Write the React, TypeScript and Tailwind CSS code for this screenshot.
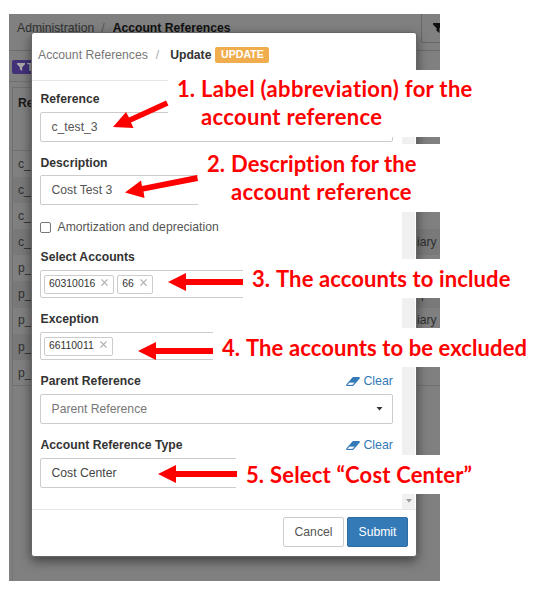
import type { ReactNode } from "react";

const rows = [
  { ref: "c_", type: "" },
  { ref: "c_", type: "" },
  { ref: "c_", type: "" },
  { ref: "c_", type: "iary" },
  { ref: "p_", type: "" },
  { ref: "p_", type: "›pan" },
  { ref: "p_", type: "iary :" },
  { ref: "p_", type: "" },
  { ref: "p_", type: "" },
];

function FunnelIcon({ className }: { className: string }) {
  return (
    <svg viewBox="0 0 14 14" className={className} fill="currentColor">
      <path d="M0 0h14v2L9 7.500V14L5 11V7.500L0 2z" />
    </svg>
  );
}

function EraserIcon() {
  return (
    <svg viewBox="0 256 1920 1280" className="h-[9px] w-[14px]" fill="currentColor" stroke="currentColor" strokeWidth="50">
      <path d="M896 1408l336-384H464l-336 384h768zM1909 331q15 34 9.500 71.500T1888 468L992 1492q-38 44-96 44H128q-38 0-69.500-20.500T11 1461q-15-34-9.500-71.500T32 1324L928 300q38-44 96-44h768q38 0 69.500 20.500T1909 331z" />
    </svg>
  );
}

function Label({ children, clear }: { children: ReactNode; clear?: boolean }) {
  return (
    <div className="flex h-4 items-center justify-between">
      <span className="pl-[0.5px] text-[12.2px] font-bold text-[#333]">{children}</span>
      {clear && (
        <span className="flex items-center gap-[3px] text-[12.4px] text-[#337ab7]">
          <EraserIcon />
          Clear
        </span>
      )}
    </div>
  );
}

function Tag({ children }: { children: ReactNode }) {
  return (
    <span className="flex h-[19px] items-center gap-[6px] rounded-[2px] border border-[#ccc] pr-[5px] pl-1 text-[10.4px] text-[#333]">
      {children}
      <svg viewBox="0 0 8 8" className="mb-[3px] size-[7px]" stroke="#aaa" strokeWidth="1.300">
        <path d="M.5 .5l7 7M7.500 .5l-7 7" />
      </svg>
    </span>
  );
}

function Note({ box, number, children }: { box: string; number: string; children: ReactNode }) {
  return (
    <div className={`absolute right-0 flex items-start bg-white font-['Lato',sans-serif] text-[22px] leading-[28px] font-bold whitespace-nowrap text-[#f00] [font-variant-ligatures:none] ${box}`}>
      <span className="w-[24px] shrink-0 tracking-normal">{number}</span>
      <div>{children}</div>
    </div>
  );
}

export default function App() {
  return (
    <div className="relative h-[592px] w-[537px] overflow-hidden bg-white pt-[14px] pl-[9px] font-['Liberation_Sans',Arial,sans-serif] text-[12.2px]">
      <div className="relative h-[567px] w-[431px] overflow-hidden bg-[#808080] whitespace-nowrap text-[#303030]">
        <div className="flex h-[37px] items-start justify-between border-b border-[#6c6c6c]">
          <div className="flex gap-[7px] pt-[7px] pl-2 leading-[14px]">
            <span>Administration</span>
            <span className="text-[#555]">/</span>
            <b className="pl-[1px] text-[#101010]">Account References</b>
          </div>
          <div className="flex h-[29px] w-[19px] items-center overflow-hidden border-b border-l border-[#686868] pl-[11px] text-[#111]">
            <FunnelIcon className="size-[10px] shrink-0" />
          </div>
        </div>
        <div className="flex h-[31px] items-start border-b border-[#707070] pt-[9px] pl-[3px]">
          <span className="flex h-[14px] w-8 items-center gap-[2px] rounded-[2px] bg-[#43317a] px-[5px] text-[10px] font-bold text-[#aaa]">
            <FunnelIcon className="size-2" />
            T
          </span>
        </div>
        <div className="mt-[5px] ml-[3px] h-[299px] border border-r-0 border-[#707070]">
          <div className="h-[63px] border-b border-[#707070] pt-[6px] pl-[5px] font-bold text-[#181818]">Re</div>
          {rows.map((row, i) => (
            <div key={i} className={`flex h-[26.1px] items-center pl-[5px] ${i % 2 ? "bg-[#797979]" : ""}`}>
              <span className="w-[399px] shrink-0">{row.ref}</span>
              <span className="shrink-0">{row.type}</span>
            </div>
          ))}
        </div>
        <div className="ml-[3px] h-[200px] border-l border-[#747474]" />

        <div className="absolute top-[18px] left-[22px] flex h-[525px] w-[386px] flex-col rounded-[3px] border border-[#666] bg-white text-[#555] shadow-[0_4px_12px_rgba(0,0,0,0.5)]">
          <div className="flex h-[48px] shrink-0 items-center border-b border-[#e5e5e5] pb-[3px] pl-[6px]">
            <span className="text-[#777]">Account References</span>
            <span className="ml-2 text-[#aaa]">/</span>
            <b className="ml-[11px] text-[#333]">Update</b>
            <span className="ml-1 flex h-4 w-[54px] items-center justify-center rounded-[2px] bg-[#f0ad4e] text-[10.6px] font-bold text-white">UPDATE</span>
          </div>
          <div className="flex h-[428px] shrink-0">
            <div className="w-[361px] pt-[10px] pl-2">
              <Label>Reference</Label>
              <div className="mt-[5px] flex h-[30px] items-center rounded-[2px] border border-[#ccc] pl-[10.5px]">c_test_3</div>
              <div className="mt-[13px]">
                <Label>Description</Label>
              </div>
              <div className="mt-1 flex h-[30px] items-center rounded-[2px] border border-[#ccc] pl-[10.5px]">Cost Test 3</div>
              <div className="mt-[13px] flex h-[18px] items-center gap-[6.500px]">
                <span className="size-[11px] rounded-[2px] border border-[#777]" />
                Amortization and depreciation
              </div>
              <div className="mt-[13px]">
                <Label>Select Accounts</Label>
              </div>
              <div className="mt-[5px] flex h-[28px] items-center gap-[3px] rounded-[2px] border border-[#ccc] pl-[3px]">
                <Tag>60310016</Tag>
                <Tag>66</Tag>
              </div>
              <div className="mt-[13px]">
                <Label>Exception</Label>
              </div>
              <div className="mt-[5px] flex h-[28px] items-center rounded-[2px] border border-[#ccc] pl-[3px]">
                <Tag>66110011</Tag>
              </div>
              <div className="mt-[13px]">
                <Label clear>Parent Reference</Label>
              </div>
              <div className="mt-[5px] flex h-[30px] items-center justify-between rounded-[2px] border border-[#ccc] pr-[9px] pl-[10.5px] text-[#777]">
                Parent Reference
                <svg viewBox="0 0 6 4" className="h-1 w-[7px]" fill="#333">
                  <path d="M0 0h6L3 3.500z" />
                </svg>
              </div>
              <div className="mt-[13px]">
                <Label clear>Account Reference Type</Label>
              </div>
              <div className="mt-[5px] flex h-[30px] items-center rounded-[2px] border border-[#ccc] pl-[10.5px] text-[#444]">Cost Center</div>
            </div>
            <div className="ml-[9px] flex w-[13px] items-end justify-center bg-[#f0f0f0] pb-[6px]">
              <svg viewBox="0 0 6 4" className="h-1 w-[6px]" fill="#999">
                <path d="M0 0h6L3 3.500z" />
              </svg>
            </div>
          </div>
          <div className="flex grow items-start justify-end gap-[3px] border-t border-[#e5e5e5] pt-[7px] pr-2">
            <button className="h-[30px] w-[61px] rounded-[2px] border border-[#ccc] bg-white">Cancel</button>
            <button className="h-[30px] w-[61px] rounded-[2px] border border-[#2e6da4] bg-[#337ab7] text-white">Submit</button>
          </div>
        </div>
      </div>

      <Note box="top-[70px] left-[168px] h-[67px] pt-[5px] pl-[9px]" number="1.">
        <div className="tracking-[0.33px]">Label (abbreviation) for the</div>
        <div className="tracking-[0.33px]">account reference</div>
      </Note>
      <Note box="top-[144px] left-[198px] h-[68px] pt-[6px] pl-[9px]" number="2.">
        <div className="tracking-[0.05px]">Description for the</div>
        <div className="tracking-[0.3px]">account reference</div>
      </Note>
      <Note box="top-[259px] left-[243px] h-[39px] pt-[6px] pl-[9px] tracking-[0.12px]" number="3.">The accounts to include</Note>
      <Note box="top-[328px] left-[213px] h-[39px] pt-[6px] pl-[9px] tracking-[0.1px]" number="4.">The accounts to be excluded</Note>
      <Note box="top-[455px] left-[236px] h-[39px] pt-[6px] pl-[10px] tracking-[0.18px]" number="5.">Select “Cost Center”</Note>

      <svg viewBox="0 0 537 592" className="pointer-events-none absolute inset-0 h-[592px] w-[537px]" fill="#f00">
        <path d="M113 127l13-15 3 5.500L166 100.500l2.500 5L131 122.500l2.500 5.500z" />
        <path d="M125 192.500l16-12 1 5.500L197 175l1 6L143.500 191.500l1 6.500z" />
        <path d="M168 282l18-9v6h57v6h-57v6z" />
        <path d="M138 351l18-9v6h57v6h-57v6z" />
        <path d="M158 474l18-9v6h61v6h-61v6z" />
      </svg>
    </div>
  );
}
